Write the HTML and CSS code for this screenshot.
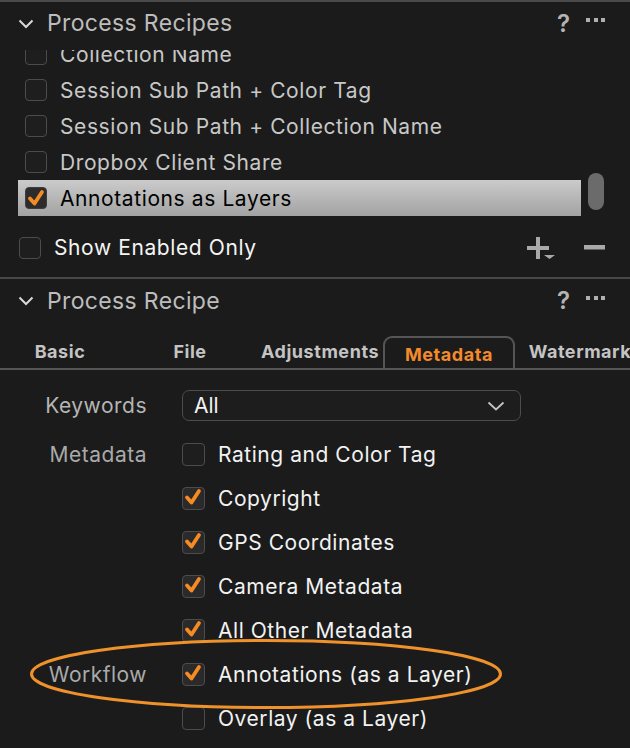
FILE: index.html
```html
<!DOCTYPE html>
<html>
<head>
<meta charset="utf-8">
<link rel="stylesheet" href="styles.css">
</head>
<body>
<div class="rule"></div>

<div class="section-head">
  <svg class="chev" width="16" height="10" viewBox="0 0 16 10"><polyline points="1.5,1.5 8,8 14.5,1.5" fill="none" stroke="#d8d8d8" stroke-width="2"/></svg>
  <span class="section-title">Process Recipes</span>
  <span class="help">?</span>
  <span class="more"><i></i><i></i><i></i></span>
</div>

<div class="recipes">
  <div class="recipe-list">
    <div class="rows">
      <div class="row"><span class="cb"></span><span>Collection Name</span></div>
      <div class="row"><span class="cb"></span><span>Session Sub Path + Color Tag</span></div>
      <div class="row"><span class="cb"></span><span>Session Sub Path + Collection Name</span></div>
      <div class="row"><span class="cb"></span><span>Dropbox Client Share</span></div>
      <div class="row selected"><span class="cb checked"><svg viewBox="0 0 22 22"><polyline points="5,11.5 9.5,16.5 17,5" fill="none" stroke="#f58b22" stroke-width="3.8" stroke-linecap="round" stroke-linejoin="round"/></svg></span><span>Annotations as Layers</span></div>
    </div>
  </div>
  <div class="scroll-track"><div class="thumb" style="top:123px"></div></div>
</div>

<div class="list-footer">
  <span class="cb"></span>
  <span class="show-only">Show Enabled Only</span>
  <svg class="plus" width="28" height="22" viewBox="0 0 28 22"><rect x="0" y="9" width="22" height="4" fill="#a9a9a9"/><rect x="9" y="0" width="4" height="22" fill="#a9a9a9"/><polygon points="17,18 28,18 22.5,22" fill="#a9a9a9"/></svg>
  <svg class="minus" width="21" height="5" viewBox="0 0 21 5"><rect x="0" y="0" width="21" height="4.5" fill="#a9a9a9"/></svg>
</div>

<div class="divider"></div>

<div class="section-head second">
  <svg class="chev" width="16" height="10" viewBox="0 0 16 10"><polyline points="1.5,1.5 8,8 14.5,1.5" fill="none" stroke="#d8d8d8" stroke-width="2"/></svg>
  <span class="section-title">Process Recipe</span>
  <span class="help">?</span>
  <span class="more"><i></i><i></i><i></i></span>
</div>

<div class="tabbar">
  <div class="tabs">
    <div class="tab">Basic</div>
    <div class="tab">File</div>
    <div class="tab">Adjustments</div>
    <div class="tab active">Metadata</div>
    <div class="tab">Watermark</div>
  </div>
</div>

<div class="form">
  <div class="kw-row">
    <span class="label">Keywords</span>
    <div class="select"><span>All</span><svg width="18" height="10" viewBox="0 0 18 10"><polyline points="1.5,1.5 9,8.5 16.5,1.5" fill="none" stroke="#c4c4c4" stroke-width="1.8"/></svg></div>
  </div>
  <div class="meta">
    <span class="label">Metadata</span>
    <div class="opt"><span class="cb"></span><span>Rating and Color Tag</span></div>
    <span class="label"></span>
    <div class="opt"><span class="cb checked"><svg viewBox="0 0 22 22"><polyline points="5,11.5 9.5,16.5 17,5" fill="none" stroke="#f58b22" stroke-width="3.8" stroke-linecap="round" stroke-linejoin="round"/></svg></span><span>Copyright</span></div>
    <span class="label"></span>
    <div class="opt"><span class="cb checked"><svg viewBox="0 0 22 22"><polyline points="5,11.5 9.5,16.5 17,5" fill="none" stroke="#f58b22" stroke-width="3.8" stroke-linecap="round" stroke-linejoin="round"/></svg></span><span>GPS Coordinates</span></div>
    <span class="label"></span>
    <div class="opt"><span class="cb checked"><svg viewBox="0 0 22 22"><polyline points="5,11.5 9.5,16.5 17,5" fill="none" stroke="#f58b22" stroke-width="3.8" stroke-linecap="round" stroke-linejoin="round"/></svg></span><span>Camera Metadata</span></div>
    <span class="label"></span>
    <div class="opt"><span class="cb checked"><svg viewBox="0 0 22 22"><polyline points="5,11.5 9.5,16.5 17,5" fill="none" stroke="#f58b22" stroke-width="3.8" stroke-linecap="round" stroke-linejoin="round"/></svg></span><span>All Other Metadata</span></div>
    <span class="label">Workflow</span>
    <div class="opt"><span class="cb checked"><svg viewBox="0 0 22 22"><polyline points="5,11.5 9.5,16.5 17,5" fill="none" stroke="#f58b22" stroke-width="3.8" stroke-linecap="round" stroke-linejoin="round"/></svg></span><span>Annotations (as a Layer)</span></div>
    <span class="label"></span>
    <div class="opt"><span class="cb"></span><span>Overlay (as a Layer)</span></div>
    <svg class="ring" width="474" height="74" viewBox="0 0 474 74"><ellipse cx="237" cy="37" rx="234.5" ry="33.5" fill="none" stroke="#f0922b" stroke-width="3"/></svg>
  </div>
</div>
</body>
</html>
```

FILE: styles.css
```css
* { box-sizing: border-box; }
html, body {
  margin: 0;
  padding: 0;
  background: #1b1b1b;
  overflow: hidden;
}
body {
  width: 630px;
  height: 748px;
  font-family: "Inter", "Liberation Sans", Arial, sans-serif;
  color: #c9c9c9;
}
.rule { height: 2px; background: #4a4a4a; }
.divider { height: 2px; background: #484848; }

.section-head {
  height: 42px;
  display: flex;
  align-items: center;
  padding-left: 18px;
  padding-right: 25px;
}
.section-head.second { height: 43px; }
.chev { flex: none; margin-right: 13px; margin-top: 1px; }
.section-title {
  font-size: 23px;
  color: #bdbdbd;
  flex: 1;
  letter-spacing: 0.35px;
}
.help {
  font-size: 24px;
  font-weight: 600;
  color: #b4b4b4;
  margin-right: 16px;
}
.more { display: flex; gap: 3.5px; margin-top: -6px; }
.more i { display: block; width: 4px; height: 4px; background: #b0b0b0; }

.recipes { height: 174px; display: flex; padding-top: 6px; }
.recipe-list {
  width: 581px;
  padding-left: 18px;
  overflow: hidden;
}
.rows { margin-top: -14px; }
.row {
  height: 36px;
  display: flex;
  align-items: center;
  padding-left: 7px;
  gap: 13px;
  font-size: 21px;
  letter-spacing: 0.6px;
  color: #c8c8c8;
}
.row.selected {
  background: linear-gradient(#cbcbcb, #a2a2a2);
  color: #000;
}
.scroll-track { flex: 1; position: relative; }
.thumb {
  position: absolute;
  left: 7px;
  width: 16px;
  height: 37px;
  border-radius: 8px;
  background: #6b6b6b;
}

.cb {
  flex: none;
  width: 22px;
  height: 22px;
  border: 1.5px solid #4c4c4c;
  border-radius: 4px;
  background: #1e1e1e;
  position: relative;
}
.cb.checked { background: #2a2a2a; }
.cb svg { position: absolute; left: -1.5px; top: -1.5px; width: 22px; height: 22px; }
.row.selected .cb { border-color: #3e3e3e; background: #2c2c2c; }

.list-footer {
  height: 59px;
  display: flex;
  align-items: center;
  padding-left: 19px;
  padding-right: 25px;
}
.show-only {
  font-size: 21px;
  letter-spacing: 0.6px;
  color: #f4f4f4;
  margin-left: 13px;
  flex: 1;
}
.plus { margin-right: 29px; margin-top: 1px; }
.minus { margin-top: 0; }

.tabbar {
  height: 48px;
  border-bottom: 2px solid #555;
  overflow: hidden;
  display: flex;
  align-items: flex-end;
}
.tabs {
  display: grid;
  grid-template-columns: repeat(5, 130px);
  margin-left: -5px;
  height: 32px;
}
.tab {
  display: flex;
  align-items: center;
  justify-content: center;
  font-size: 18px;
  font-weight: 700;
  letter-spacing: 0.55px;
  color: #c4c4c4;
  padding-bottom: 1px;
  white-space: nowrap;
}
.tab.active {
  color: #f38a2b;
  border: 2px solid #555;
  border-bottom: none;
  border-radius: 9px 9px 0 0;
  margin-left: -2px;
  margin-bottom: -2px;
  padding-bottom: 0;
  background: #1b1b1b;
}

.form { padding-top: 20px; }
.label {
  font-size: 21px;
  letter-spacing: 0.5px;
  color: #aaa;
  text-align: right;
}
.kw-row {
  display: grid;
  grid-template-columns: 147px 339px;
  column-gap: 35px;
  align-items: center;
  height: 31px;
  margin-bottom: 11px;
}
.kw-row .label { color: #b5b5b5; }
.select {
  height: 31px;
  border: 1.5px solid #4d4d4d;
  border-radius: 7px;
  background: #1d1d1d;
  display: flex;
  align-items: center;
  justify-content: space-between;
  padding-left: 11px;
  padding-right: 15px;
  font-size: 21px;
  color: #f2f2f2;
}
.meta {
  position: relative;
  display: grid;
  grid-template-columns: 147px 1fr;
  grid-auto-rows: 44px;
  column-gap: 35px;
  align-items: center;
}
.opt {
  display: flex;
  align-items: center;
  gap: 13px;
  font-size: 21px;
  letter-spacing: 0.55px;
  color: #f2f2f2;
}
.opt .cb { width: 23px; height: 23px; }
.ring {
  position: absolute;
  left: 29px;
  top: 205px;
  pointer-events: none;
}
```
